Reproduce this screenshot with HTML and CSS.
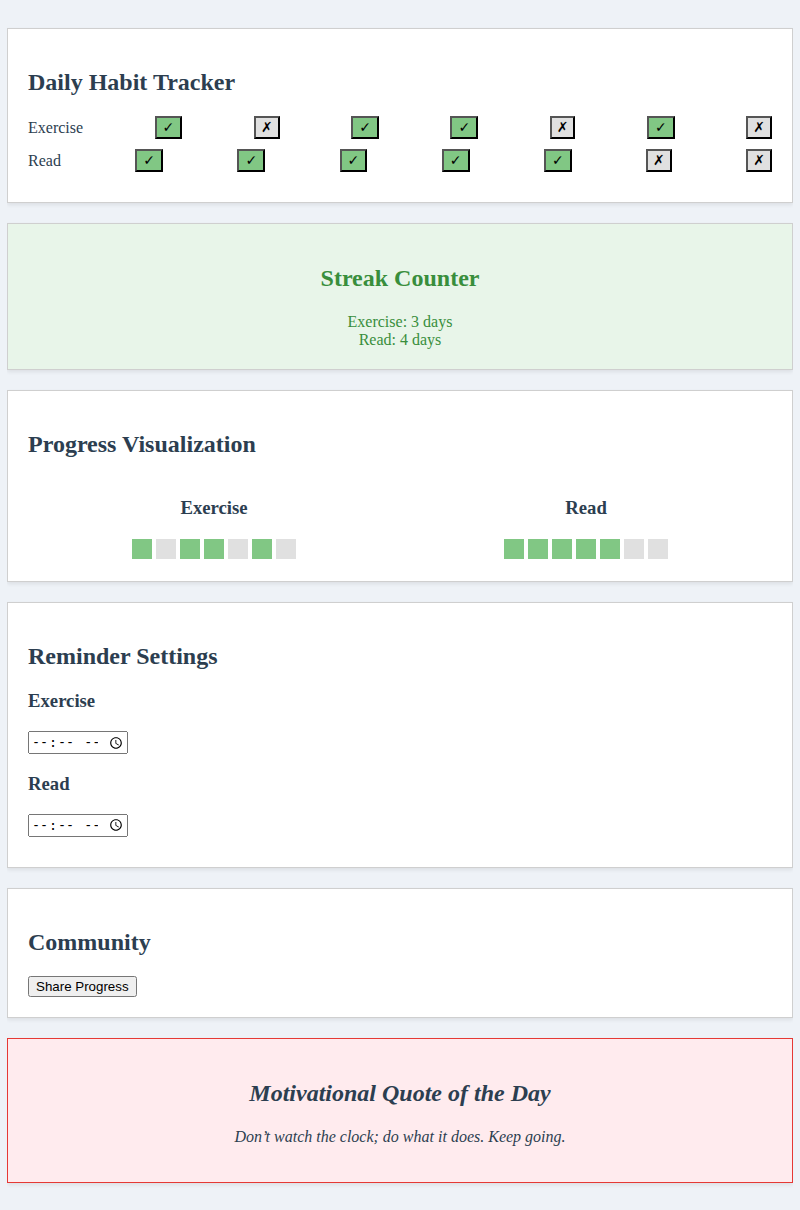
FILE: index.html
```html
<!DOCTYPE html>
<html lang="en">
<head>
<meta charset="utf-8">
<title>Habit Tracker</title>
<link rel="stylesheet" href="styles.css">
</head>
<body>
  <section class="card">
    <h2>Daily Habit Tracker</h2>
    <div class="habit-row">
      <span class="habit-name">Exercise</span>
      <button class="day done">✓</button>
      <button class="day">✗</button>
      <button class="day done">✓</button>
      <button class="day done">✓</button>
      <button class="day">✗</button>
      <button class="day done">✓</button>
      <button class="day">✗</button>
    </div>
    <div class="habit-row">
      <span class="habit-name">Read</span>
      <button class="day done">✓</button>
      <button class="day done">✓</button>
      <button class="day done">✓</button>
      <button class="day done">✓</button>
      <button class="day done">✓</button>
      <button class="day">✗</button>
      <button class="day">✗</button>
    </div>
  </section>

  <section class="card streak">
    <h2>Streak Counter</h2>
    <div>Exercise: 3 days</div>
    <div>Read: 4 days</div>
  </section>

  <section class="card">
    <h2>Progress Visualization</h2>
    <div class="progress-grid">
      <div class="progress-col">
        <h3>Exercise</h3>
        <div class="squares">
          <span class="sq on"></span><span class="sq"></span><span class="sq on"></span><span class="sq on"></span><span class="sq"></span><span class="sq on"></span><span class="sq"></span>
        </div>
      </div>
      <div class="progress-col">
        <h3>Read</h3>
        <div class="squares">
          <span class="sq on"></span><span class="sq on"></span><span class="sq on"></span><span class="sq on"></span><span class="sq on"></span><span class="sq"></span><span class="sq"></span>
        </div>
      </div>
    </div>
  </section>

  <section class="card">
    <h2>Reminder Settings</h2>
    <div class="reminder">
      <h3>Exercise</h3>
      <input type="time" class="time">
    </div>
    <div class="reminder">
      <h3>Read</h3>
      <input type="time" class="time">
    </div>
  </section>

  <section class="card">
    <h2>Community</h2>
    <div><button class="share">Share Progress</button></div>
  </section>

  <section class="card quote">
    <h2>Motivational Quote of the Day</h2>
    <p>Don’t watch the clock; do what it does. Keep going.</p>
  </section>
</body>
</html>
```

FILE: styles.css
```css
body {
  margin: 8px 7px;
  background: #eef2f7;
  font-family: "Liberation Serif", "Times New Roman", serif;
  color: #2c3e50;
}

.card {
  background: #ffffff;
  border: 1px solid #cfcfcf;
  box-shadow: 0 2px 4px rgba(0, 0, 0, 0.08);
  margin: 20px 0;
  padding: 20px;
}

h2 {
  font-size: 24px;
  margin: 20px 0;
}

h3 {
  font-size: 18.72px;
  margin: 18.72px 0;
}

.habit-row {
  display: flex;
  align-items: center;
  justify-content: space-between;
  margin: 10px 0;
}

.day {
  background: #e0e0e0;
  border: 2px outset #555;
  padding: 1px 5px;
  font-size: 14px;
  color: #000;
  font-family: "DejaVu Sans", sans-serif;
  line-height: 17px;
}

.day.done {
  background: #81c784;
  padding: 1px 6px;
}

.streak {
  background: #e8f5e9;
  color: #388e3c;
  text-align: center;
}

.streak h2,
.quote h2 {
  line-height: 29px;
}

.progress-grid {
  display: grid;
  grid-template-columns: 1fr 1fr;
  text-align: center;
}

.squares {
  display: flex;
  justify-content: center;
  gap: 4px;
  padding: 2px 0;
}

.sq {
  width: 20px;
  height: 20px;
  background: #e0e0e0;
}

.sq.on {
  background: #81c784;
}

.reminder {
  margin-bottom: 10px;
}

.time {
  display: block;
  box-sizing: border-box;
  width: 100px;
  height: 23px;
}

.quote {
  background: #ffebee;
  border-color: #e53935;
  text-align: center;
}

.quote h2 {
  font-style: italic;
}

.quote p {
  font-style: italic;
  margin: 16px 0;
}
```
